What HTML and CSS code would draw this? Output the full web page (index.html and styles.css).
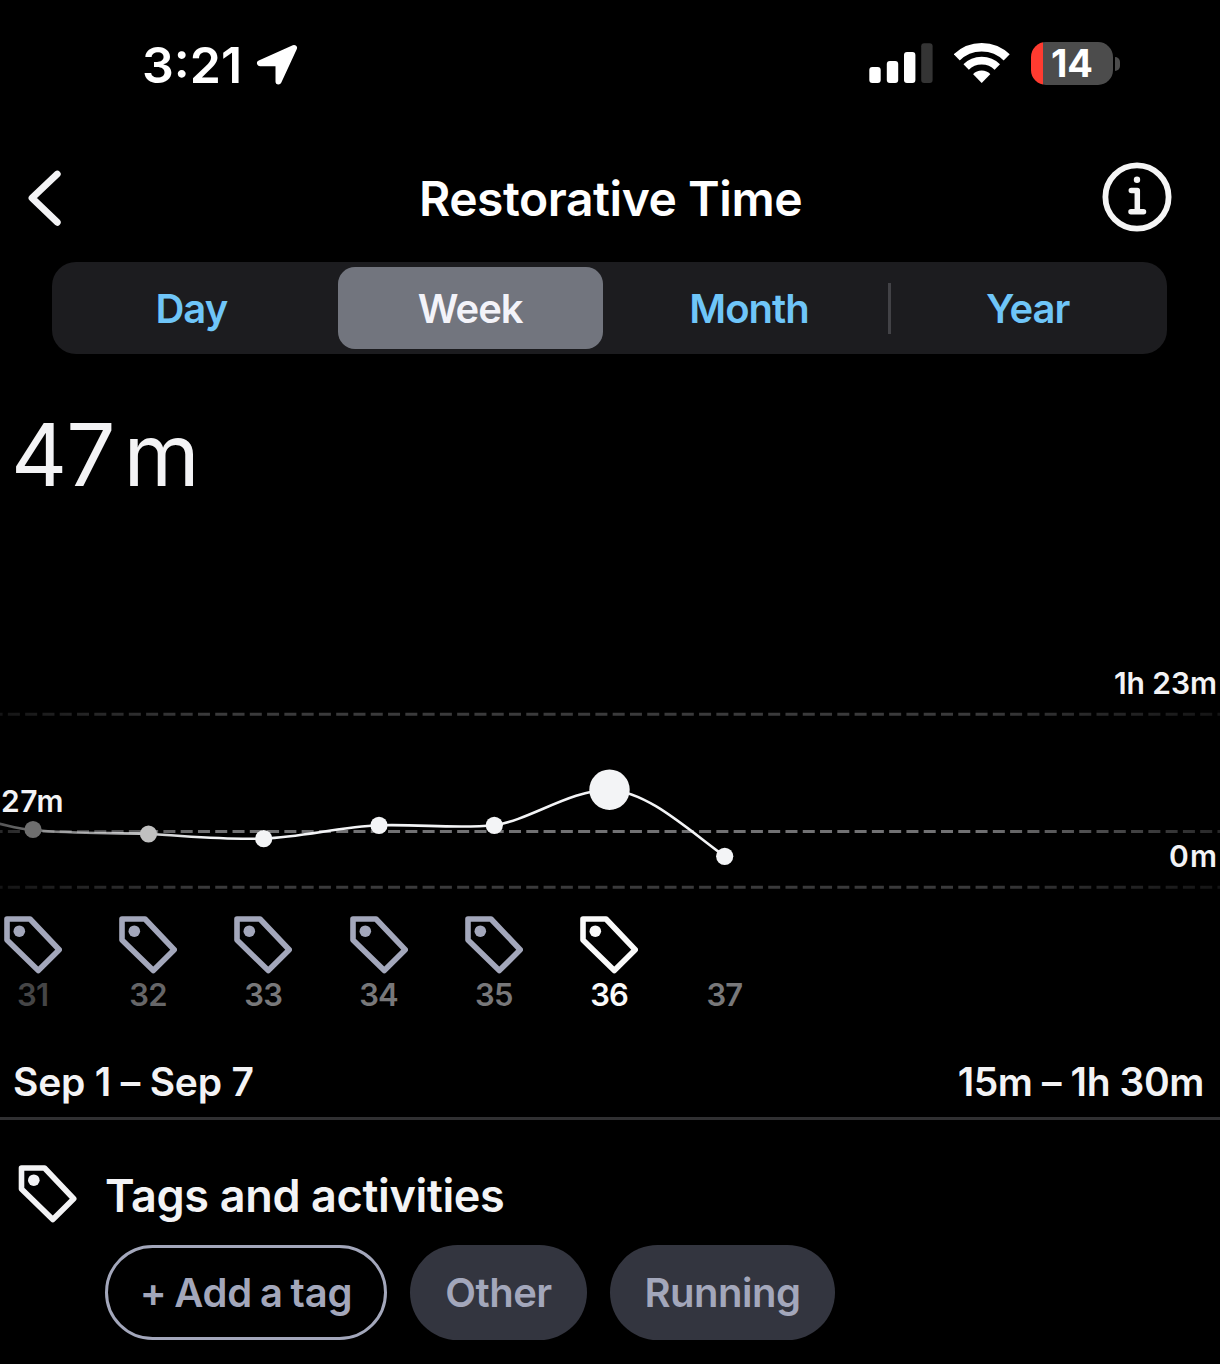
FILE: index.html
```html
<!DOCTYPE html>
<html lang="en">
<head>
    <meta charset="UTF-8">
    <meta name="viewport" content="width=device-width, initial-scale=1.0">
    <title>Restorative Time</title>
    <link rel="stylesheet" href="styles.css">
</head>
<body>
    <svg class="defs" width="0" height="0">
        <symbol id="tag" viewBox="0 0 58 58">
            <path d="M3 3H26L55.2 33.8L34.3 54.6L3 24Z" fill="none" stroke="currentColor" stroke-width="5.6" stroke-linejoin="round"/>
            <circle cx="15.3" cy="15.2" r="5.8" fill="currentColor"/>
        </symbol>
    </svg>

    <div class="status-bar">
        <div class="clock">
            <span class="time">3:21</span>
            <svg width="42" height="42" viewBox="256 44 42 42">
                <path d="M294 48L260 63.3H278.5V81.5Z" fill="#fff" stroke="#fff" stroke-width="6" stroke-linejoin="round"/>
            </svg>
        </div>
        <div class="indicators">
            <svg width="64" height="44" viewBox="869 41 64 44" fill="#fff">
                <rect x="869.3" y="67" width="11.4" height="16" rx="3"/>
                <rect x="886.8" y="61" width="11.4" height="22" rx="3"/>
                <rect x="904" y="52" width="11.4" height="31" rx="3"/>
                <rect x="921.2" y="43.3" width="11.4" height="39.7" rx="3" fill="#343434"/>
            </svg>
            <svg width="56" height="44" viewBox="954 41 56 44">
                <clipPath id="fan"><path d="M981.7 83L951 51.5V30H1012.4V51.5Z"/></clipPath>
                <g clip-path="url(#fan)" fill="none" stroke="#fff">
                    <circle cx="981.7" cy="83" r="35.800" stroke-width="8.6"/>
                    <circle cx="981.7" cy="83" r="22.4" stroke-width="7.8"/>
                    <circle cx="981.7" cy="83" r="6.2" stroke-width="12.4"/>
                </g>
            </svg>
            <div class="battery"><span>14</span></div>
        </div>
    </div>

    <header class="header">
        <svg width="36" height="60" viewBox="26 167 36 60">
            <path d="M57.3 174L32 198L57.3 222.3" fill="none" stroke="#f3f3f5" stroke-width="6.8" stroke-linecap="round" stroke-linejoin="round"/>
        </svg>
        <h1>Restorative Time</h1>
        <svg width="70" height="70" viewBox="1101.5 162.5 70 70" fill="none" stroke="#f5f5f5" stroke-width="5.8" stroke-linecap="round" stroke-linejoin="round">
            <circle cx="1136.5" cy="197.5" r="31.6"/>
            <path d="M1130.8 191H1136.8V212.3M1130.5 212.3H1143" stroke-width="5.5"/>
            <circle cx="1136.5" cy="180.3" r="3.2" fill="#f5f5f5" stroke="none"/>
        </svg>
    </header>

    <nav class="segments">
        <button class="day">Day</button>
        <button class="active">Week</button>
        <button class="month">Month</button>
        <button class="year">Year</button>
    </nav>

    <div class="value">47<span>m</span></div>

    <svg class="chart" width="1220" height="260" viewBox="0 650 1220 260">
        <defs>
            <linearGradient id="edge" gradientUnits="userSpaceOnUse" x1="0" y1="0" x2="1220" y2="0">
                <stop offset="0" stop-color="#fff" stop-opacity="0.35"/>
                <stop offset="0.17" stop-color="#fff"/>
                <stop offset="0.8" stop-color="#fff"/>
                <stop offset="1" stop-color="#fff" stop-opacity="0.35"/>
            </linearGradient>
            <mask id="fade" maskUnits="userSpaceOnUse" x="0" y="650" width="1220" height="260">
                <rect x="0" y="650" width="1220" height="260" fill="url(#edge)"/>
            </mask>
        </defs>
        <g class="grid" mask="url(#fade)">
            <path d="M0 714.3H1220"/>
            <path class="average" d="M0 831.6H1220"/>
            <path d="M0 887.3H1220"/>
        </g>
        <g mask="url(#fade)">
            <path class="line" d="M-4 823C10 826 18 829 33 830C75 834 110 832.5 148.5 834C188 836 225 840 263.7 838.5C302 837 340 827 379 825.3C420 824 455 829 494.3 825.3C530 820 570 790 609.5 789.7C648 792 686 828 724.7 856.3"/>
        </g>
        <g fill="#f3f4f6">
            <circle cx="33" cy="829.5" r="8.6" fill="#6e6e6e"/>
            <circle cx="148.5" cy="834" r="8.6" fill="#c0c0c0"/>
            <circle cx="263.7" cy="838.7" r="8.6"/>
            <circle cx="379" cy="825.3" r="8.6"/>
            <circle cx="494.3" cy="825.3" r="8.6"/>
            <circle cx="609.5" cy="789.7" r="20.2"/>
            <circle cx="724.7" cy="856.3" r="8.6"/>
        </g>
        <g class="labels">
            <text x="1114" y="694" textLength="103">1h 23m</text>
            <text x="1" y="811.5" textLength="62.500">27m</text>
            <text x="1169" y="867.3" textLength="48">0m</text>
        </g>
    </svg>

    <div class="weeks">
        <div class="week first"><svg><use href="#tag"/></svg><span>31</span></div>
        <div class="week second"><svg><use href="#tag"/></svg><span>32</span></div>
        <div class="week"><svg><use href="#tag"/></svg><span>33</span></div>
        <div class="week"><svg><use href="#tag"/></svg><span>34</span></div>
        <div class="week"><svg><use href="#tag"/></svg><span>35</span></div>
        <div class="week current"><svg><use href="#tag"/></svg><span>36</span></div>
        <div class="week"><svg></svg><span>37</span></div>
    </div>

    <div class="summary">
        <span class="dates">Sep 1 – Sep 7</span>
        <span class="range">15m – 1h 30m</span>
    </div>

    <section class="tags">
        <svg class="tags-icon"><use href="#tag"/></svg>
        <div>
            <h2>Tags and activities</h2>
            <div class="pills">
                <button class="pill add">+ Add a tag</button>
                <button class="pill other">Other</button>
                <button class="pill running">Running</button>
            </div>
        </div>
    </section>
</body>
</html>
```

FILE: styles.css
```css
* {
    box-sizing: border-box;
}

body {
    margin: 0;
    width: 1220px;
    height: 1364px;
    overflow: hidden;
    background: #000;
    color: #f3f3f5;
    font-family: Inter, "Liberation Sans", sans-serif;
    font-weight: 600;
}

svg {
    display: block;
    flex: none;
}

.defs {
    display: none;
}

h1, h2 {
    margin: 0;
    font-weight: 600;
}

button {
    border: none;
    padding: 0;
    background: none;
    font: inherit;
    white-space: nowrap;
}

/* status bar */
.status-bar {
    display: flex;
    justify-content: space-between;
    height: 132px;
    padding: 41px 100px 0 142px;
    color: #fff;
}

.clock {
    display: flex;
    gap: 12px;
    height: 48px;
    align-items: center;
}

.time {
    width: 102px;
    font-size: 50px;
    letter-spacing: 0;
    white-space: nowrap;
}

.indicators {
    display: flex;
    gap: 21px;
    height: 44px;
}

.battery {
    position: relative;
    width: 82px;
    height: 43px;
    margin: 1px 7px 0 0;
    border-radius: 15px;
    background: linear-gradient(to right, #ff3b30 12px, #4c4c4c 12px);
    font-size: 38px;
    font-weight: 700;
    line-height: 43px;
    text-align: center;
}

.battery::after {
    content: "";
    position: absolute;
    left: 84px;
    top: 15px;
    width: 5px;
    height: 14px;
    border-radius: 0 7px 7px 0;
    background: #4c4c4c;
}

/* title */
.header {
    display: flex;
    justify-content: space-between;
    align-items: center;
    height: 130px;
    padding: 0 48px 0 26px;
}

.header h1 {
    margin-left: 57px;
    padding-top: 3px;
    color: #fff;
    font-size: 48px;
    letter-spacing: -0.45px;
    line-height: 60px;
    white-space: nowrap;
}

/* period switch */
.segments {
    display: flex;
    width: 1115px;
    height: 92px;
    margin-left: 52px;
    padding: 5px 0;
    border-radius: 24px;
    background: #1c1c1f;
}

.segments button {
    flex: 1;
    color: #6fc5f8;
    font-size: 40px;
    letter-spacing: -1px;
}

.segments .active {
    flex: none;
    width: 265px;
    margin: 0 7px;
    border-radius: 17px;
    background: #72757e;
    color: #f3f3f9;
}

.segments .year {
    background: linear-gradient(#424246, #424246) no-repeat 0 50% / 3px 51px;
}

.value {
    height: 296px;
    padding: 48px 0 0 11px;
    font-size: 87px;
    font-weight: 400;
    letter-spacing: -1px;
    line-height: 106px;
}

.value span {
    margin-left: 9px;
}

/* chart */
.chart {
    overflow: hidden;
}

.grid path {
    stroke: #3a3a3b;
    stroke-width: 3;
    stroke-dasharray: 12 5.28;
    stroke-dashoffset: 9.4;
}

.grid .average {
    stroke: #717173;
}

.line {
    fill: none;
    stroke: #f3f4f6;
    stroke-width: 2.6;
}

.labels {
    fill: #f3f3f5;
    font-size: 30px;
}

.weeks {
    display: flex;
    height: 138px;
    padding-top: 6px;
    margin-left: -25px;
}

.week {
    display: flex;
    flex-direction: column;
    align-items: center;
    width: 115.3px;
    color: #a3a7bb;
}

.week svg {
    width: 58px;
    height: 58px;
}

.week span {
    margin-top: 2px;
    color: #78787a;
    font-size: 31px;
    letter-spacing: -0.8px;
    line-height: 38px;
}

.week.first span {
    color: #454546;
}

.week.second span {
    color: #666668;
}

.week.current,
.week.current span {
    color: #fafafa;
}

/* date range */
.summary {
    display: flex;
    justify-content: space-between;
    height: 72px;
    padding: 10px 16px 0 13px;
    border-bottom: 3px solid #303032;
    font-size: 39px;
    letter-spacing: -0.2px;
    line-height: 48px;
    white-space: nowrap;
}

.range {
    letter-spacing: -0.4px;
}

/* tags */
.tags {
    display: flex;
    gap: 28px;
    padding: 45px 0 0 18px;
}

.tags-icon {
    width: 59px;
    height: 58px;
}

.tags h2 {
    height: 80px;
    font-size: 45px;
    letter-spacing: -0.35px;
    line-height: 61px;
}

.pills {
    display: flex;
    gap: 23px;
}

.pill {
    height: 95px;
    border-radius: 48px;
    background: #33353f;
    color: #a3a7bb;
    font-size: 40px;
    letter-spacing: -0.5px;
}

.pill.add {
    width: 282px;
    border: 3px solid #a3a7bb;
    background: none;
    letter-spacing: -0.2px;
    word-spacing: -2px;
}

.pill.other {
    width: 177px;
}

.pill.running {
    width: 225px;
}
```
